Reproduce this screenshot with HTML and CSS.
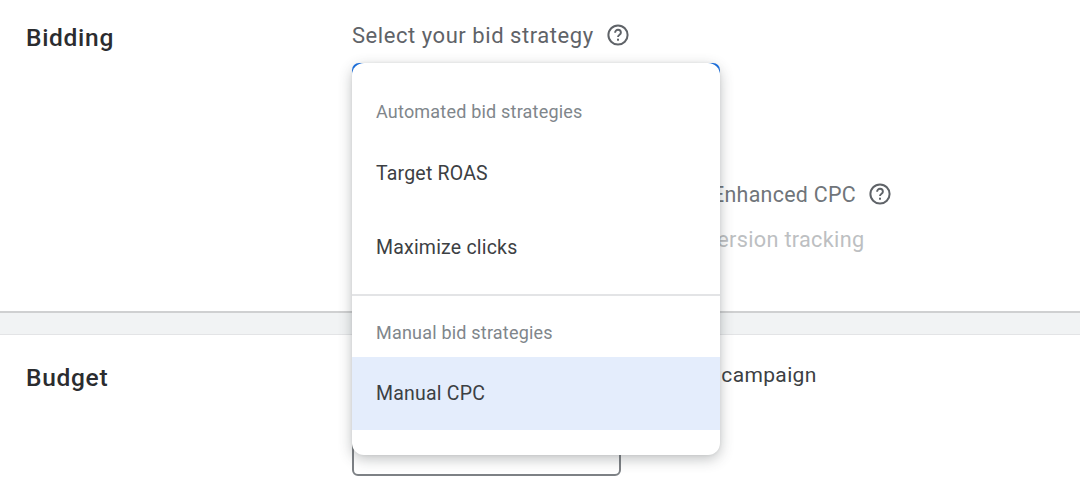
FILE: index.html
```html
<!DOCTYPE html>
<html lang="en">
<head>
<meta charset="utf-8">
<title>Bidding</title>
<link rel="stylesheet" href="styles.css">
</head>
<body>
<main class="page">
  <section class="card bidding">
    <h2 class="card-title">Bidding</h2>
    <div class="card-body">
      <div class="label-row">
        <span class="label">Select your bid strategy</span>
        <svg class="help" viewBox="0 0 24 24" aria-hidden="true"><circle cx="12" cy="12" r="9.6" fill="none" stroke="currentColor" stroke-width="2"/><path d="M9.1 9.7a2.9 2.9 0 0 1 5.8 0c0 2-2.9 2-2.9 4.3" fill="none" stroke="currentColor" stroke-width="1.9"/><rect x="11" y="15.7" width="2" height="2" fill="currentColor"/></svg>
      </div>
      <div class="select-stub"></div>
      <div class="enhanced-row">
        <span class="enhanced">Enhanced CPC</span>
        <svg class="help" viewBox="0 0 24 24" aria-hidden="true"><circle cx="12" cy="12" r="9.6" fill="none" stroke="currentColor" stroke-width="2"/><path d="M9.1 9.7a2.9 2.9 0 0 1 5.8 0c0 2-2.9 2-2.9 4.3" fill="none" stroke="currentColor" stroke-width="1.9"/><rect x="11" y="15.7" width="2" height="2" fill="currentColor"/></svg>
      </div>
      <div class="tracking">conversion tracking</div>
    </div>
    <div class="menu">
      <div class="group-label first">Automated bid strategies</div>
      <div class="option roas">Target ROAS</div>
      <div class="option clicks">Maximize clicks</div>
      <hr class="divider">
      <div class="group-label second">Manual bid strategies</div>
      <div class="option selected">Manual CPC</div>
    </div>
  </section>
  <div class="gap"></div>
  <section class="card budget">
    <h2 class="card-title">Budget</h2>
    <div class="card-body">
      <div class="campaign">this campaign</div>
      <div class="input-stub"></div>
    </div>
  </section>
</main>
</body>
</html>
```
FILE: styles.css
```css
* { box-sizing: border-box; }
html, body { margin: 0; padding: 0; }
body {
  width: 1080px;
  height: 484px;
  overflow: hidden;
  background: #fff;
  font-family: Roboto, "Liberation Sans", sans-serif;
  color: #3c4043;
}
.page { display: flex; flex-direction: column; height: 484px; }
.card { position: relative; display: flex; padding-left: 26px; }
.bidding { flex: none; height: 311px; padding-top: 19px; }
.gap {
  flex: none;
  height: 24px;
  background: #f1f3f4;
  border-top: 2px solid #cfd0d1;
  border-bottom: 1px solid #e3e4e6;
}
.budget { flex: none; height: 149px; padding-top: 28px; }
.card-title {
  margin: 0;
  width: 326px;
  font-size: 24.5px;
  line-height: 38px;
  font-weight: 500;
  letter-spacing: 0.7px;
  color: #2b2c2f;
}
.budget .card-title { line-height: 30px; }
.card-body { display: flex; flex-direction: column; width: 600px; }
.label-row { display: flex; align-items: center; gap: 13px; height: 32px; color: #5f6368; }
.label { font-size: 22px; letter-spacing: 0.55px; white-space: nowrap; }
.help { width: 24px; height: 24px; color: #5f6368; flex: none; margin-left: -1px; }
.select-stub {
  height: 40px;
  margin-top: 12px;
  width: 368px;
  border: 3px solid #1a73e8;
  border-bottom: 0;
  border-radius: 7px 7px 0 0;
}
.enhanced-row { display: flex; align-items: center; gap: 13px; margin-top: 75px; padding-left: 360px; height: 32px; color: #70757a; }
.enhanced { font-size: 21.4px; letter-spacing: 0.3px; white-space: nowrap; }
.tracking { margin-top: 15px; padding-left: 318px; font-size: 21.7px; letter-spacing: 0.3px; line-height: 30px; color: #bdbfc2; white-space: nowrap; }
.campaign { padding-left: 328px; font-size: 21px; letter-spacing: 0.35px; line-height: 28px; margin-top: -2px; color: #3c4043; white-space: nowrap; }
.input-stub { margin-top: 35px; width: 269px; height: 52px; border: 2px solid #7d8185; border-radius: 6px; }
.menu {
  position: absolute;
  z-index: 2;
  left: 352px;
  top: 63px;
  width: 368px;
  height: 392px;
  background: #fff;
  border-radius: 12px;
  box-shadow: 0 4px 14px rgba(60, 64, 67, 0.32), 0 0 3px rgba(60, 64, 67, 0.1);
}
.group-label { padding-left: 24px; font-size: 18px; letter-spacing: 0.2px; line-height: 24px; color: #80868b; }
.group-label.first { margin-top: 37px; }
.group-label.second { margin-top: 25px; }
.option { display: flex; align-items: center; padding-left: 24px; font-size: 19.5px; letter-spacing: 0.2px; color: #3c4043; }
.roas { height: 50px; margin-top: 24px; }
.clicks { height: 50px; margin-top: 24px; }
.divider { margin: 22px 0 0; border: 0; border-top: 2px solid #e3e4e6; }
.selected { height: 73px; margin-top: 12px; background: #e4edfc; }
```
